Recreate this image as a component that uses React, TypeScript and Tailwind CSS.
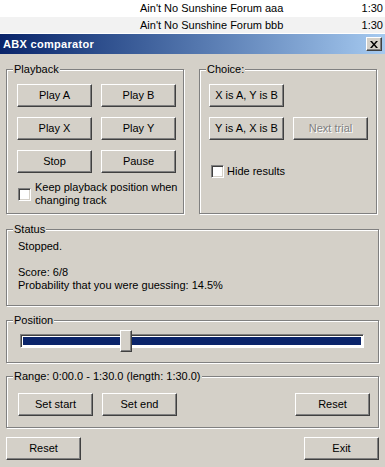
import type { ReactNode } from "react";

const Btn = ({
  children,
  disabled = false,
  className = "",
}: {
  children: ReactNode;
  disabled?: boolean;
  className?: string;
}) => (
  <button
    className={`h-[23px] w-[75px] flex items-center justify-center bg-[#d4d0c8] border border-t-white border-l-white border-r-[#404040] border-b-[#404040] shadow-[inset_-1px_-1px_0_#808080] leading-[13px] ${
      disabled ? "text-[#808080] [text-shadow:1px_1px_0_#fff]" : "text-black"
    } ${className}`}
  >
    {children}
  </button>
);

const Check = () => (
  <span className="block h-[13px] w-[13px] shrink-0 bg-white border border-t-[#808080] border-l-[#808080] border-r-white border-b-white shadow-[inset_1px_1px_0_#404040,inset_-1px_-1px_0_#d4d0c8]" />
);

const Group = ({
  label,
  className = "",
  children,
}: {
  label: string;
  className?: string;
  children?: ReactNode;
}) => (
  <div
    className={`relative border border-[#808080] shadow-[inset_1px_1px_0_#fff,1px_1px_0_#fff] ${className}`}
  >
    <span className="absolute left-[6px] -top-[7px] px-[1px] bg-[#d4d0c8] leading-[13px]">
      {label}
    </span>
    {children}
  </div>
);

export default function App() {
  return (
    <div className="w-[385px] h-[467px] overflow-hidden bg-white text-[11px] text-black font-['Liberation_Sans',Arial,sans-serif]">
      {/* playlist rows behind the dialog */}
      <div className="grid grid-cols-[140px_1fr_auto] h-[17px] items-center pr-[2px] bg-white">
        <span />
        <span>Ain't No Sunshine Forum aaa</span>
        <span>1:30</span>
      </div>
      <div className="grid grid-cols-[140px_1fr_auto] h-[16px] items-center pr-[2px] bg-[#f2f2f2]">
        <span />
        <span>Ain't No Sunshine Forum bbb</span>
        <span>1:30</span>
      </div>
      <div className="h-[1px] bg-white" />

      {/* title bar */}
      <div className="h-[20px] flex items-center justify-between pl-[3px] pr-[3px] bg-gradient-to-r from-[#0a246a] to-[#a6caf0]">
        <span className="text-white font-bold text-[11px] tracking-[0.3px]">ABX comparator</span>
        <span className="h-[14px] w-[16px] flex items-center justify-center bg-[#d4d0c8] border border-t-white border-l-white border-r-[#404040] border-b-[#404040] shadow-[inset_-1px_-1px_0_#808080]">
          <svg width="8" height="7" viewBox="0 0 8 7">
            <path d="M0 0h2l2 2.5L6 0h2L5 3.5 8 7H6L4 4.5 2 7H0l3-3.5z" fill="#000" />
          </svg>
        </span>
      </div>

      {/* dialog body */}
      <div className="h-[413px] bg-[#d4d0c8] px-[6px] pt-[15px]">
        <div className="flex gap-[15px]">
          <Group label="Playback" className="w-[178px] h-[145px] pt-[14px] pl-[10px]">
            <div className="grid grid-cols-[75px_75px] gap-x-[9px] gap-y-[10px]">
              <Btn>Play A</Btn>
              <Btn>Play B</Btn>
              <Btn>Play X</Btn>
              <Btn>Play Y</Btn>
              <Btn>Stop</Btn>
              <Btn>Pause</Btn>
            </div>
            <div className="mt-[8px] ml-[1px] flex items-center gap-[4px] leading-[13px]">
              <Check />
              <span>
                Keep playback position when
                <br />
                changing track
              </span>
            </div>
          </Group>

          <Group label="Choice:" className="w-[178px] h-[145px] pt-[14px] pl-[9px]">
            <Btn>X is A, Y is B</Btn>
            <div className="mt-[10px] flex gap-[9px]">
              <Btn>Y is A, X is B</Btn>
              <Btn disabled>Next trial</Btn>
            </div>
            <div className="mt-[25px] ml-[2px] flex items-center gap-[3px] leading-[13px]">
              <Check />
              <span>Hide results</span>
            </div>
          </Group>
        </div>

        <Group label="Status" className="mt-[15px] h-[77px] pt-[10px] pl-[11px] leading-[13px]">
          <div>Stopped.</div>
          <div className="h-[13px]" />
          <div>Score: 6/8</div>
          <div>Probability that you were guessing: 14.5%</div>
        </Group>

        <Group label="Position" className="mt-[14px] h-[43px] pt-[13px] pl-[13px]">
          <div className="relative w-[344px] h-[14px] bg-white border border-t-[#808080] border-l-[#808080] border-r-white border-b-white shadow-[inset_1px_1px_0_#404040] p-[2px]">
            <div className="h-full bg-[#0a246a]" />
            <div className="absolute left-[99px] -top-[5px] w-[12px] h-[22px] bg-[#d4d0c8] border border-t-white border-l-white border-r-[#404040] border-b-[#404040] shadow-[inset_-1px_-1px_0_#808080]" />
          </div>
        </Group>

        <Group
          label="Range: 0:00.0 - 1:30.0 (length: 1:30.0)"
          className="mt-[13px] h-[52px] pt-[16px] pl-[11px] pr-[8px] flex items-start gap-[9px]"
        >
          <Btn>Set start</Btn>
          <Btn>Set end</Btn>
          <Btn className="ml-auto">Reset</Btn>
        </Group>

        <div className="mt-[9px] flex justify-between">
          <Btn>Reset</Btn>
          <Btn>Exit</Btn>
        </div>
      </div>
    </div>
  );
}
